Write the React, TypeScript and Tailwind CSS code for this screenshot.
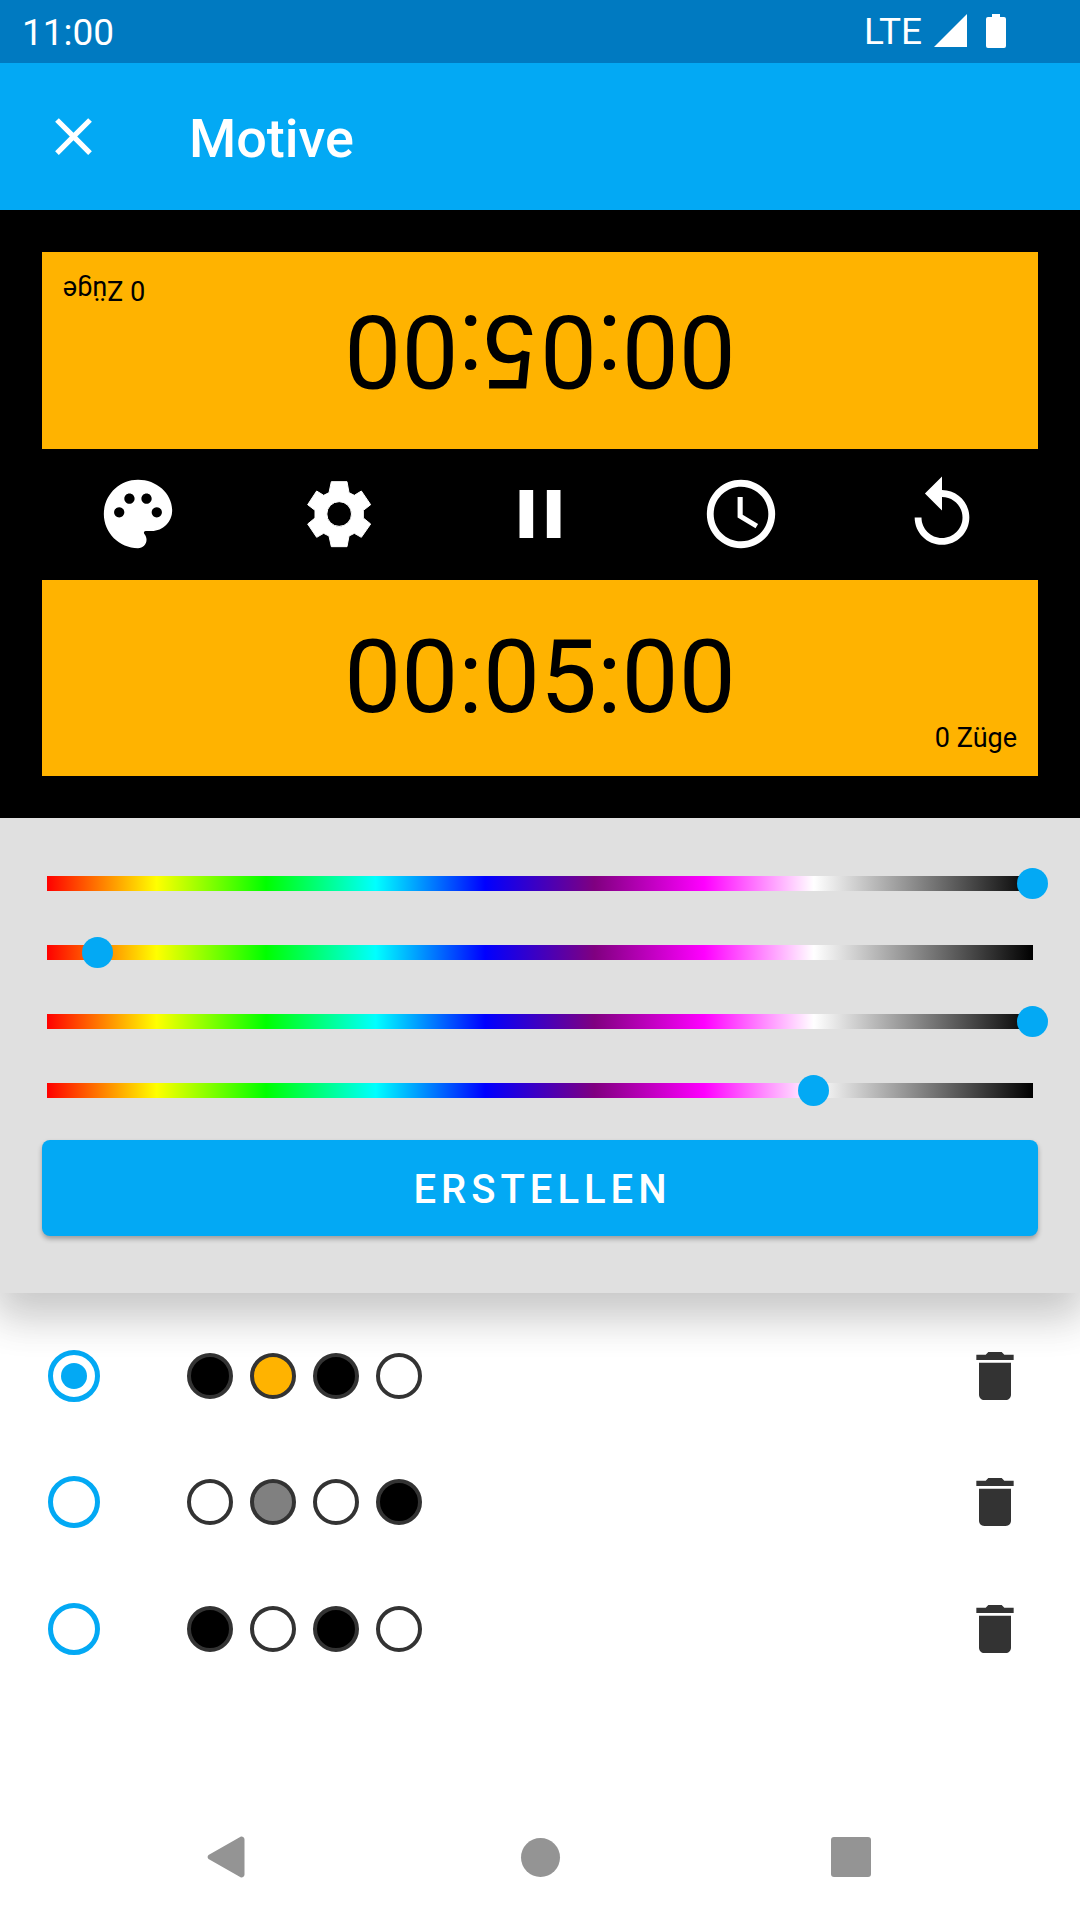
import React from 'react';
import { MdAccessTime, MdClose, MdDelete, MdPause, MdReplay } from 'react-icons/md';

const sliders = [99.9, 5.1, 99.9, 77.7];

const schemes = [
    { selected: true, colors: ['bg-black', 'bg-[#ffb300]', 'bg-black', 'bg-white'] },
    { selected: false, colors: ['bg-white', 'bg-[#808080]', 'bg-white', 'bg-black'] },
    { selected: false, colors: ['bg-black', 'bg-white', 'bg-black', 'bg-white'] },
];

const Timer: React.FC<{ flipped?: boolean }> = ({ flipped }) => (
    <div className={`relative bg-[#ffb300] flex items-center justify-center text-black ${flipped ? 'h-[197px] rotate-180' : 'h-[196px]'}`}>
        <span className="text-[101.5px] leading-none">00:05:00</span>
        <span className="absolute right-[21px] bottom-[24px] text-[27px] leading-none">0 Züge</span>
    </div>
);

const ColorSlider: React.FC<{ value: number }> = ({ value }) => (
    <div className="relative h-[15px] bg-[linear-gradient(to_right,#f00,#ff0,#0f0,#0ff,#00f,#800080,#f0f,#fff,#808080,#000)]">
        <div
            className="absolute top-[-8px] w-[31px] h-[31px] -ml-[15px] rounded-full bg-[#03a9f4]"
            style={{ left: `${value}%` }}
        />
    </div>
);

const PaletteIcon = () => (
    <svg width="82" height="82" viewBox="0 0 24 24" fill="currentColor">
        <path d="M12 2C6.49 2 2 6.49 2 12s4.49 10 10 10c1.38 0 2.5-1.12 2.5-2.5 0-.61-.23-1.2-.64-1.67-.08-.1-.13-.21-.13-.33 0-.28.22-.5.5-.5H16c3.31 0 6-2.69 6-6 0-4.96-4.49-9-10-9zm5.5 11c-.83 0-1.5-.67-1.5-1.5s.67-1.5 1.5-1.5 1.5.67 1.5 1.5-.67 1.5-1.5 1.5zm-3-4c-.83 0-1.5-.67-1.5-1.5S13.67 6 14.5 6s1.5.67 1.5 1.5S15.33 9 14.5 9zM5 11.5c0-.83.67-1.5 1.5-1.5s1.5.67 1.5 1.5S7.33 13 6.5 13 5 12.33 5 11.5zm6-4c0 .83-.67 1.5-1.5 1.5S8 8.33 8 7.5 8.67 6 9.5 6s1.5.67 1.5 1.5z" />
    </svg>
);

const GearIcon = () => (
    <svg width="82" height="82" viewBox="624 23 246 246" fill="currentColor">
        <path
            fillRule="evenodd"
            stroke="currentColor"
            strokeWidth="3"
            strokeLinejoin="round"
            d="M724 49H771L777 82L793 90L814 77L842 118L820 135V158L842 176L814 216L793 204L777 212L771 244H724L717 212L701 204L680 216L653 176L675 158V135L653 118L680 77L701 90L717 82ZM747.500 109a37 37 0 1 0 0 74a37 37 0 1 0 0-74Z"
        />
    </svg>
);

export default function App() {
    return (
        <div className="w-[1080px] h-[1920px] flex flex-col bg-white overflow-hidden font-['Roboto',sans-serif]">
            <div className="h-[63px] shrink-0 bg-[#007ac1] flex items-center text-white pl-[22px] pr-[74px]">
                <span className="text-[37px] leading-none pt-[2px]">11:00</span>
                <span className="ml-auto text-[37px] leading-none">LTE</span>
                <svg className="ml-[12px] mb-[2px]" width="33" height="33" viewBox="0 0 33 33">
                    <polygon points="33,0 33,33 0,33" fill="#fff" />
                </svg>
                <svg className="ml-[19px] mb-[1px]" width="20" height="34" viewBox="0 0 20 34">
                    <path d="M6 0h8v3h4a2 2 0 0 1 2 2v27a2 2 0 0 1-2 2H2a2 2 0 0 1-2-2V5a2 2 0 0 1 2-2h4z" fill="#fff" />
                </svg>
            </div>

            <div className="h-[147px] shrink-0 bg-[#03a9f4] flex items-center text-white">
                <MdClose size={63} className="ml-[42px] shrink-0" />
                <span className="ml-[84px] text-[54px] leading-none font-medium pt-[4px]">Motive</span>
            </div>

            <div className="h-[608px] shrink-0 bg-black px-[42px] pt-[42px]">
                <Timer flipped />
                <div className="h-[131px] px-[55px] pb-[1px] flex items-center justify-between text-white">
                    <PaletteIcon />
                    <GearIcon />
                    <MdPause size={82} />
                    <MdAccessTime size={82} />
                    <MdReplay size={82} />
                </div>
                <Timer />
            </div>

            <div className="relative z-10 h-[475px] shrink-0 bg-[#e0e0e0] px-[42px] pt-[58px] shadow-[0_24px_38px_3px_rgba(0,0,0,0.14),0_9px_46px_8px_rgba(0,0,0,0.1)]">
                <div className="pl-[5px] pr-[5px] flex flex-col gap-[54px]">
                    {sliders.map((value, i) => (
                        <ColorSlider key={i} value={value} />
                    ))}
                </div>
                <button className="mt-[42px] w-full h-[96px] pl-[5px] pt-[4px] rounded-[8px] bg-[#03a9f4] text-white text-[40px] font-medium tracking-[5px] shadow-[0_3px_5px_rgba(0,0,0,0.3)]">
                    ERSTELLEN
                </button>
            </div>

            <div className="flex-1 pt-[20px]">
                {schemes.map((scheme, i) => (
                    <div key={i} className="h-[126.25px] flex items-center pl-[48px]">
                        <div className="w-[52px] h-[52px] rounded-full border-[5.5px] border-[#03a9f4] flex items-center justify-center">
                            {scheme.selected && <div className="w-[26px] h-[26px] rounded-full bg-[#03a9f4]" />}
                        </div>
                        <div className="ml-[87px] flex gap-[17px]">
                            {scheme.colors.map((color, j) => (
                                <div key={j} className={`w-[46px] h-[46px] rounded-full border-[4.5px] border-[#333] ${color}`} />
                            ))}
                        </div>
                        <MdDelete size={64} className="ml-auto mr-[53px] text-[#333]" />
                    </div>
                ))}
            </div>

            <div className="h-[126px] shrink-0 flex items-center pl-[207px]">
                <svg width="38" height="42" viewBox="0 0 38 42">
                    <path d="M34 0.5a3 3 0 0 1 3.5 3v35a3 3 0 0 1-3.5 3L1.5 23a3 3 0 0 1 0-4z" fill="#949494" />
                </svg>
                <div className="ml-[276px] w-[39px] h-[39px] rounded-full bg-[#949494]" />
                <div className="ml-[271px] w-[40px] h-[40px] rounded-[3px] bg-[#949494]" />
            </div>
        </div>
    );
}
